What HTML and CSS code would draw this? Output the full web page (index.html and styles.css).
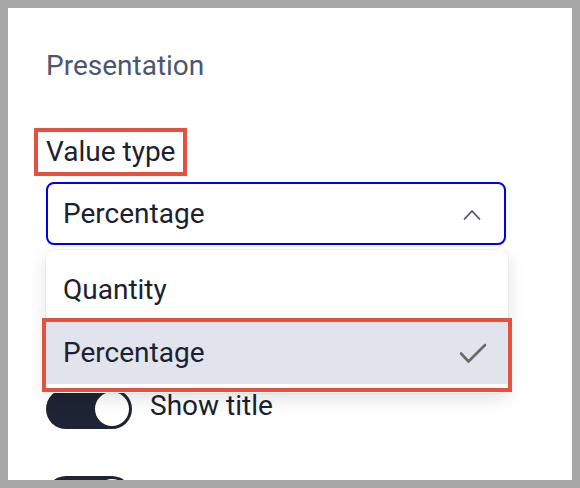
FILE: index.html
```html
<!DOCTYPE html>
<html lang="en">
<head>
<meta charset="utf-8">
<title>Presentation</title>
<link rel="stylesheet" href="styles.css">
</head>
<body>
<div class="panel">
  <h2 class="heading">Presentation</h2>
  <div class="field-label"><span class="label highlight">Value type</span></div>
  <div class="select-wrap">
    <div class="select">
      <span class="select-value">Percentage</span>
      <svg class="chevron" width="18" height="11" viewBox="0 0 18 11"><path d="M1.5 10 L9 2 L16.5 10" fill="none" stroke="#4b5672" stroke-width="1.8" stroke-linecap="round" stroke-linejoin="round"/></svg>
    </div>
    <ul class="menu">
      <li class="option">Quantity</li>
      <li class="option selected">Percentage
        <svg class="check" width="28" height="22" viewBox="0 0 28 22"><path d="M2 11.5 L9.5 19.5 L26 3" fill="none" stroke="#696969" stroke-width="2.6" stroke-linecap="round" stroke-linejoin="round"/></svg>
      </li>
    </ul>
  </div>
  <div class="toggle-row first">
    <span class="toggle on"><span class="knob"></span></span>
    <span class="toggle-text">Show title</span>
  </div>
  <div class="toggle-row second">
    <span class="toggle on"><span class="knob"></span></span>
  </div>
</div>
</body>
</html>
```

FILE: styles.css
```css
html, body {
  margin: 0;
  padding: 0;
}
body {
  background: #a6a6a6;
  font-family: Roboto, "Liberation Sans", Arial, sans-serif;
  width: 580px;
  height: 488px;
  overflow: hidden;
}
.panel {
  margin: 8px;
  width: 564px;
  height: 472px;
  background: #ffffff;
  box-sizing: border-box;
  padding: 42px 66px 0 38px;
  overflow: hidden;
}
.heading {
  margin: 0 0 54px 0;
  font-size: 28px;
  line-height: 32px;
  font-weight: 400;
  color: #4b5672;
}
.field-label {
  font-size: 28px;
  line-height: 32px;
  color: #1c2130;
}
.label {
  display: inline-block;
  position: relative;
}
.label.highlight::after {
  content: "";
  position: absolute;
  top: -8px;
  left: -12px;
  right: -12px;
  bottom: -8px;
  border: 4px solid #e4513f;
}
.select-wrap {
  position: relative;
  margin-top: 14px;
  width: 460px;
}
.select {
  height: 63px;
  box-sizing: border-box;
  border: 2px solid #0000ee;
  border-radius: 8px;
  display: flex;
  align-items: center;
  justify-content: space-between;
  padding: 0 23px 0 15px;
  font-size: 28px;
  line-height: 32px;
  color: #1c2130;
}
.chevron {
  display: block;
  margin-top: 2px;
}
.menu {
  position: absolute;
  top: 68px;
  left: 0;
  width: 462px;
  margin: 0;
  padding: 8px 0 9px;
  list-style: none;
  background: #ffffff;
  border-radius: 8px;
  box-shadow: 0 0 0 1px rgba(0, 0, 0, 0.03), 0 6px 18px rgba(0, 0, 0, 0.12);
  z-index: 2;
}
.option {
  position: relative;
  height: 63px;
  display: flex;
  align-items: center;
  justify-content: space-between;
  padding: 0 21px 0 17px;
  font-size: 28px;
  line-height: 32px;
  color: #1c2130;
}
.option.selected {
  background: #e1e4ec;
}
.option.selected::after {
  content: "";
  position: absolute;
  top: -3px;
  left: -4px;
  right: -4px;
  bottom: -8px;
  border: 4px solid #e4513f;
}
.check {
  display: block;
}
.toggle-row {
  display: flex;
  align-items: flex-start;
  gap: 18px;
}
.toggle-row.first {
  margin-top: 144px;
}
.toggle-row.second {
  margin-top: 47px;
}
.toggle {
  width: 86px;
  height: 40px;
  box-sizing: border-box;
  border-radius: 20px;
  background: #1e2433;
  padding: 3px;
  display: flex;
  justify-content: flex-end;
  align-items: center;
  flex-shrink: 0;
}
.knob {
  width: 34px;
  height: 34px;
  border-radius: 50%;
  background: #ffffff;
}
.toggle-text {
  margin-top: 1px;
  font-size: 28px;
  line-height: 32px;
  color: #1c2130;
}
```
